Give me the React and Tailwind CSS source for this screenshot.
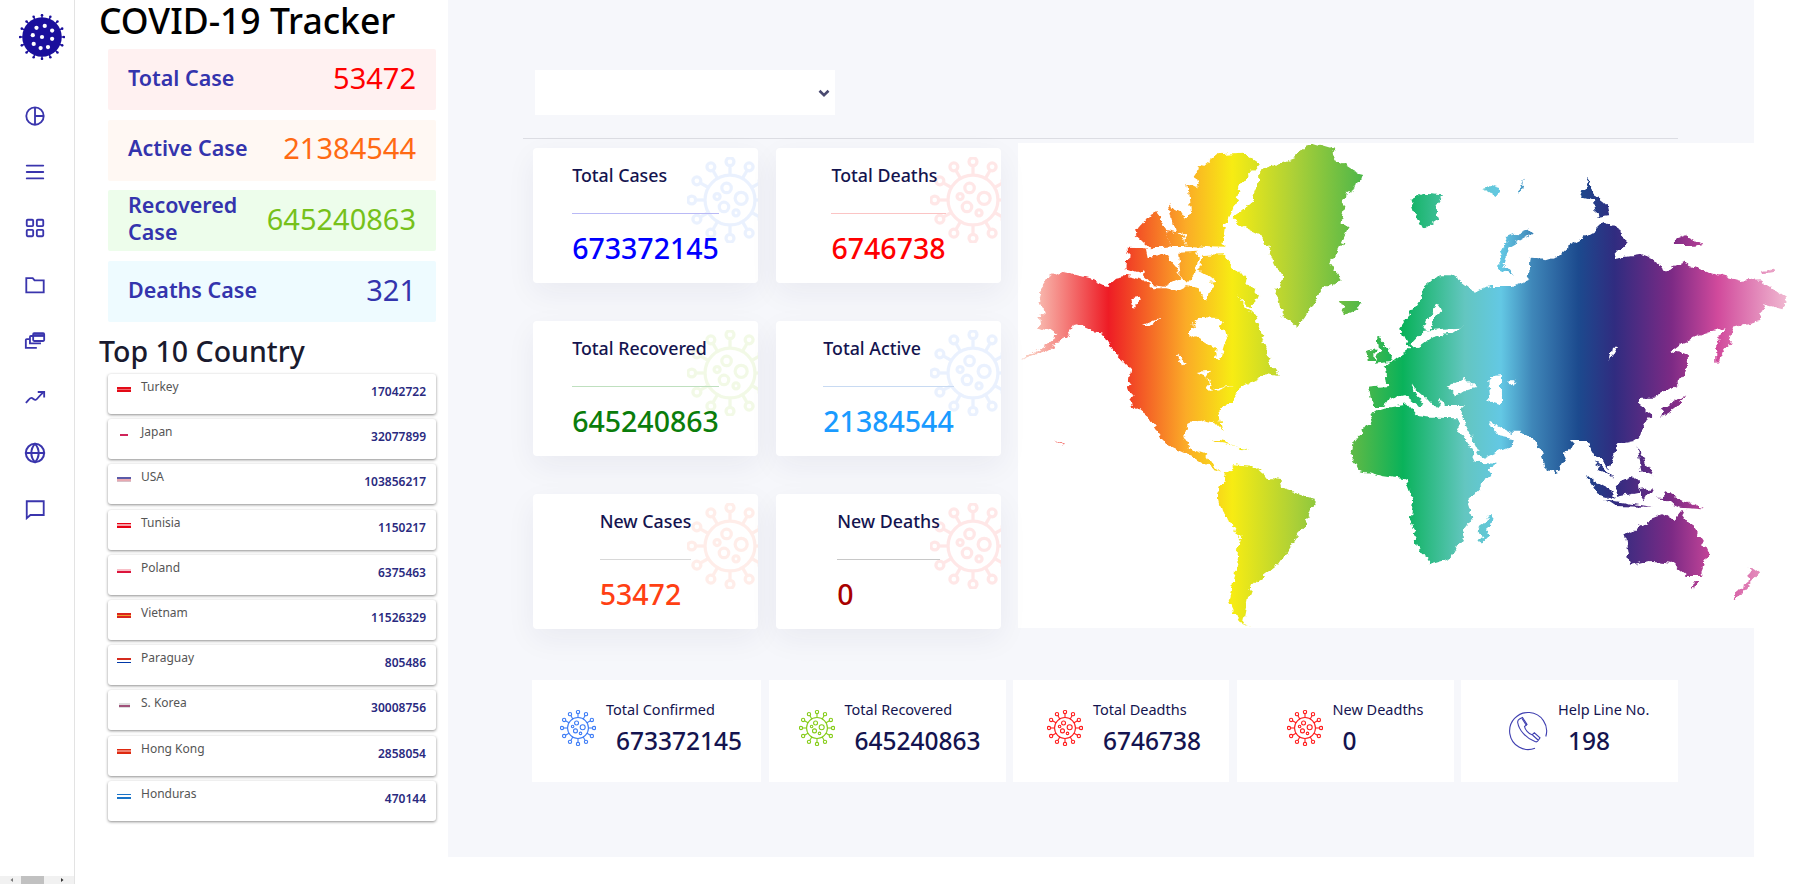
import { AlignJustify, LayoutGrid, Globe } from "lucide-react";

const font = "font-['Noto_Sans',sans-serif]";

function spokes(n, r) {
  return Array.from({ length: n }, (_, i) => {
    const a = (i * 2 * Math.PI) / n - Math.PI / 2;
    return [50 + r * Math.cos(a), 50 + r * Math.sin(a), Math.cos(a), Math.sin(a)];
  });
}

function Virus({ color, size, className = "", sw = 3.4 }) {
  return (
    <svg viewBox="0 0 100 100" width={size} height={size} className={className} fill="none" stroke={color} strokeWidth={sw}>
      <circle cx="50" cy="50" r="29" />
      {spokes(12, 29).map(([x, y, c, s], i) => (
        <g key={i}>
          <line x1={x} y1={y} x2={x + c * 11} y2={y + s * 11} />
          <circle cx={x + c * 15.5} cy={y + s * 15.5} r="4.600" />
        </g>
      ))}
      <circle cx="46" cy="36" r="5.500" />
      <circle cx="63" cy="48" r="7" />
      <circle cx="35" cy="46" r="3.500" />
      <circle cx="43" cy="58" r="5.500" />
      <circle cx="57" cy="65" r="3.500" />
    </svg>
  );
}

function Logo() {
  const dots = [[50, 50], [38, 30], [56, 26], [72, 36], [30, 46], [72, 54], [32, 65], [47, 74], [63, 72]];
  return (
    <svg viewBox="0 0 100 100" width="46" height="46" fill="#1a0f9c">
      <circle cx="50" cy="50" r="43" />
      {spokes(16, 42).map(([x, y, c, s], i) => (
        <g key={i}>
          <line x1={x} y1={y} x2={x + c * 5} y2={y + s * 5} stroke="#1a0f9c" strokeWidth="3" />
          <circle cx={x + c * 5.500} cy={y + s * 5.500} r="2.800" />
        </g>
      ))}
      {dots.map(([x, y], i) => <circle key={i} cx={x} cy={y} r="4.600" fill="#fff" />)}
    </svg>
  );
}

function SideIcon({ children }) {
  return (
    <svg viewBox="0 0 24 24" width="22" height="22" fill="none" stroke="#3a35ad" strokeWidth="2">
      {children}
    </svg>
  );
}

function PhoneIcon() {
  return (
    <svg viewBox="0 0 40 40" width="40" height="40" fill="none" stroke="#3f3fb0" strokeWidth="1.100">
      <path d="M37.800 25.500A18.500 18.500 0 1 0 27 37.200" />
      <path d="M11.500 8l3-1.500 4.500 7-2.500 2c.6 3 3.800 7 7.500 8.300l2.300-2 5.700 5-2 3c-.7 1-2 1.200-3 .8C18 27 11 19.500 9.700 11.500c-.2-1.500.5-2.800 1.800-3.500z" />
      <path d="M14 7.500l4.500 7M24.500 24l5.500 5" />
    </svg>
  );
}

const sideIcons = [
  <SideIcon key="a"><circle cx="12" cy="12" r="9.500" /><path d="M12 2.500v19M12 12h9.500" /></SideIcon>,
  <AlignJustify key="b" size={22} color="#3a35ad" strokeWidth={2} />,
  <LayoutGrid key="c" size={22} color="#3a35ad" strokeWidth={2} />,
  <SideIcon key="d"><path d="M2.500 20V4.500h7l2 2.500h10v13z" /></SideIcon>,
  <SideIcon key="e">
    <rect x="10" y="3.500" width="12" height="8.500" rx="1" />
    <path d="M10 6.500H7.500a1 1 0 0 0-1 1v7h12" />
    <path d="M6 10H3a1 1 0 0 0-1 1v8.500h12" />
    <path d="M10 6h12" strokeWidth="3" />
  </SideIcon>,
  <SideIcon key="f"><path d="M2 18.500c3-3 4-5.500 6-5.500s3 3 5 2 4-5 8-8" /><path d="M15 6.500h7v6" /></SideIcon>,
  <Globe key="g" size={22} color="#3a35ad" strokeWidth={2.200} />,
  <SideIcon key="h"><path d="M3 3.500h18.500v15H7l-4 3.500z" /></SideIcon>,
];

const land = [
  // north america
  "55,505 60,470 72,445 100,422 130,432 160,445 188,465 205,440 222,435 260,448 275,472 300,472 325,480 345,465 362,470 375,505 385,505 392,455 410,450 440,500 470,545 478,575 490,630 500,670 505,700 520,735 495,730 470,750 440,775 425,810 405,845 410,900 397,875 375,868 345,878 335,920 350,955 375,968 390,1005 412,1022 395,1015 360,985 310,948 285,900 268,860 240,825 228,770 232,715 205,670 180,610 140,585 125,580 105,625 65,660 20,688 60,650 95,610 60,590 58,560 70,545 52,520",
  // arctic islands
  "228,350 262,352 268,395 250,425 225,412",
  "262,385 300,370 322,410 330,445 300,468 275,462 255,430",
  "240,305 270,252 285,240 300,300 312,345 272,352",
  "300,300 330,310 340,345 312,345",
  "305,220 330,240 350,290 320,310",
  "345,155 365,170 355,125 400,70 450,65 480,95 450,150 435,210 415,290 410,350 340,345 330,290 350,240",
  "325,365 365,362 360,425 345,452 330,440",
  "370,372 412,370 440,415 480,495 470,530 445,505 410,465 390,440 368,420",
  // greenland, iceland
  "480,120 520,100 545,85 570,45 590,37 620,50 635,90 665,120 680,125 670,170 650,190 640,260 655,290 640,340 620,400 640,445 600,480 570,560 555,590 525,550 515,490 525,440 510,400 490,320 450,290 430,260 470,210 480,170",
  "635,510 675,510 678,530 650,550",
  // north sea islands
  "775,205 800,185 840,190 825,225 830,265 800,295 785,250",
  "915,170 930,165 950,175 940,195",
  "985,175 995,145 990,185",
  "1005,295 1005,310 965,345 955,400 975,435 945,415 945,380 965,320",
  "1120,140 1130,190 1155,220 1160,255 1135,260 1130,210 1105,200",
  "1285,320 1305,310 1340,340 1320,345 1285,345",
  "1460,420 1475,415 1478,425 1460,430",
  // eurasia
  "800,470 830,430 855,430 890,470 900,490 930,465 975,465 1005,445 1010,380 1040,385 1060,375 1085,340 1130,300 1150,270 1185,300 1190,340 1165,385 1225,370 1250,385 1265,420 1305,395 1345,420 1415,450 1450,445 1500,500 1495,535 1460,520 1450,570 1400,590 1392,640 1365,700 1365,640 1385,592 1340,610 1300,635 1280,660 1310,670 1310,720 1290,760 1245,800 1220,800 1215,820 1240,850 1225,895 1210,930 1175,940 1165,985 1160,1015 1130,970 1115,930 1090,930 1060,1020 1040,1015 1020,935 990,905 970,905 925,870 945,915 975,925 970,945 915,985 880,880 875,840 880,825 840,825 835,800 825,835 805,800 775,760 800,820 790,825 760,790 735,800 725,825 700,825 695,770 730,765 725,710 750,680 775,655 765,625 755,590 790,510",
  // africa, madagascar
  "665,930 690,880 710,835 770,820 790,855 820,860 868,862 868,890 895,960 905,992 940,995 915,1060 885,1110 895,1160 880,1190 870,1230 850,1285 810,1303 790,1250 775,1170 780,1110 765,1045 720,1035 680,1020 660,980",
  "925,1150 933,1150 925,1215 915,1238 905,1200",
  // uk, ireland
  "710,615 725,630 740,690 705,695 715,660",
  "690,665 705,655 705,690 692,690",
  // japan
  "1305,790 1290,830 1260,860 1265,835",
  // south east asia
  "1118,1035 1150,1065 1175,1105 1140,1090",
  "1150,1105 1240,1128 1170,1125",
  "1172,1060 1212,1032 1215,1085 1175,1098",
  "1215,1075 1242,1068 1228,1108",
  "1215,950 1245,1030 1222,1022",
  "1272,1082 1340,1135 1300,1130 1258,1102",
  "1130,990 1165,1040 1140,1020",
  "1052,1015 1062,1030 1055,1033",
  // oceania
  "1190,1215 1240,1165 1265,1150 1285,1170 1300,1140 1340,1230 1352,1270 1335,1335 1310,1335 1280,1295 1240,1290 1200,1305",
  "1318,1350 1330,1350 1325,1378",
  "1430,1305 1450,1330 1425,1370 1405,1410 1403,1385 1435,1345",
  // south america
  "430,1000 470,1005 500,1040 525,1045 530,1075 590,1105 575,1170 560,1210 520,1300 490,1335 470,1360 460,1400 450,1480 465,1490 445,1480 425,1410 435,1320 445,1220 410,1140 402,1090 410,1060",
  // caribbean, hawaii
  "390,925 440,945 400,935",
  "440,950 465,955 445,958",
  "85,928 105,945 100,950",
];

const water = [
  "350,590 365,560 410,565 418,620 405,690 395,650 350,610",
  "362,725 385,722 378,738",
  "378,740 392,778 384,780",
  "395,770 425,765 400,780",
  "325,670 340,700 332,703",
  "230,505 255,500 240,530",
  "255,585 290,560 270,585",
  "826,518 832,530 818,570 812,600 800,595 805,560",
  "800,600 848,592 880,590 850,606 815,620 785,655 775,640",
  "845,770 880,740 900,770 860,790",
  "925,740 950,735 950,820 930,810",
  "965,745 980,745 975,765",
  "1165,650 1175,650 1160,690",
];

const stops = [
  [40, "#f9c9bd"], [190, "#ee1c25"], [340, "#fbab27"], [430, "#f7ec13"], [550, "#acd037"], [670, "#58b947"],
  [760, "#09b25a"], [880, "#63c6c0"], [950, "#63c8e4"], [1010, "#3f87b9"], [1100, "#1c4a8e"], [1170, "#302c80"],
  [1280, "#7c2a85"], [1370, "#d14a9c"], [1500, "#efb5cf"],
];

function WorldMap() {
  return (
    <svg viewBox="15 36 1425 1455" preserveAspectRatio="none" width="736" height="485" className="block overflow-visible bg-white">
      <defs>
        <linearGradient id="rainbow" gradientUnits="userSpaceOnUse" x1="0" y1="0" x2="1560" y2="0">
          {stops.map(([x, c]) => <stop key={x} offset={x / 1560} stopColor={c} />)}
        </linearGradient>
        <filter id="rough" filterUnits="userSpaceOnUse" x="0" y="0" width="1560" height="1530" colorInterpolationFilters="sRGB">
          <feTurbulence type="fractalNoise" baseFrequency="0.045" numOctaves="3" seed="4" result="n" />
          <feDisplacementMap in="SourceGraphic" in2="n" scale="22" xChannelSelector="R" yChannelSelector="G" />
        </filter>
        <mask id="landMask" maskUnits="userSpaceOnUse" x="0" y="0" width="1560" height="1530">
          <g filter="url(#rough)">
            {land.map((p, i) => <polygon key={i} points={p} fill="#fff" />)}
            {water.map((p, i) => <polygon key={i} points={p} fill="#000" />)}
          </g>
        </mask>
      </defs>
      <rect x="0" y="0" width="1560" height="1530" fill="url(#rainbow)" mask="url(#landMask)" />
    </svg>
  );
}

const flags = {
  Turkey: { c: ["#e30a17", "#f26a70", "#e30a17"] },
  Japan: { c: ["transparent", "#d0245a", "transparent"], w: "w-[8px] mx-[3px]" },
  USA: { c: ["#5a5aa8", "#e8a8b0", "#d8c0c8"] },
  Tunisia: { c: ["#e70013", "#f6a0a6", "#e70013"] },
  Poland: { c: ["#fff", "#f8c0c8", "#dc143c"] },
  Vietnam: { c: ["#da251d", "#f0a030", "#da251d"] },
  Paraguay: { c: ["#d52b1e", "#fff", "#0038a8"] },
  "S. Korea": { c: ["#ddd", "#a0527a", "#ddd"], w: "w-[11px] mx-[1.500px]" },
  "Hong Kong": { c: ["#de2910", "#f08070", "#de2910"] },
  Honduras: { c: ["#1a74c8", "#fff", "#1a74c8"] },
};

const countries = [
  ["Turkey", 17042722], ["Japan", 32077899], ["USA", 103856217], ["Tunisia", 1150217], ["Poland", 6375463],
  ["Vietnam", 11526329], ["Paraguay", 805486], ["S. Korea", 30008756], ["Hong Kong", 2858054], ["Honduras", 470144],
];

const summary = [
  { label: "Total Case", value: "53472", bg: "bg-[#fff1f1]", color: "text-[#ff0000]" },
  { label: "Active Case", value: "21384544", bg: "bg-[#fff8f3]", color: "text-[#ff6a13]" },
  { label: "Recovered Case", value: "645240863", bg: "bg-[#edfdeb]", color: "text-[#76c11a]" },
  { label: "Deaths Case", value: "321", bg: "bg-[#eefbff]", color: "text-[#3434ad]" },
];

const cards = [
  { label: "Total Cases", value: "673372145", color: "text-[#0000ff]", line: "border-[#b9b9f6]", virus: "#3b82f6" },
  { label: "Total Deaths", value: "6746738", color: "text-[#ff0000]", line: "border-[#fbc4c4]", virus: "#ff2020" },
  { label: "Total Recovered", value: "645240863", color: "text-[#0b7d0b]", line: "border-[#bfe0bf]", virus: "#84cc16" },
  { label: "Total Active", value: "21384544", color: "text-[#1a9bff]", line: "border-[#c8daf2]", virus: "#3b82f6" },
  { label: "New Cases", value: "53472", color: "text-[#ff4013]", line: "border-[#d8d8d8]", virus: "#ff5a30" },
  { label: "New Deaths", value: "0", color: "text-[#a80000]", line: "border-[#c8c8c8]", virus: "#ff2020" },
];

const bottom = [
  { label: "Total Confirmed", value: "673372145", w: "w-[229px]", pl: "pl-[28px]", icon: <Virus color="#3b7bf6" size={36} sw={3} className="-mt-[6px]" /> },
  { label: "Total Recovered", value: "645240863", w: "w-[237px]", pl: "pl-[30px]", icon: <Virus color="#84cc16" size={36} sw={3} className="-mt-[6px]" /> },
  { label: "Total Deadths", value: "6746738", w: "w-[216px]", pl: "pl-[34px]", icon: <Virus color="#ff1a1a" size={36} sw={3} className="-mt-[6px]" /> },
  { label: "New Deadths", value: "0", w: "w-[217px]", pl: "pl-[50px]", icon: <Virus color="#ff1a1a" size={36} sw={3} className="-mt-[6px]" /> },
  { label: "Help Line No.", value: "198", w: "w-[217px]", pl: "pl-[47px]", icon: <PhoneIcon /> },
];

export default function App() {
  return (
    <div className={`flex h-screen w-full overflow-hidden bg-white ${font}`}>
      {/* sidebar */}
      <aside className="relative w-[75px] shrink-0 border-r border-[#e3e3e3] flex flex-col">
        <div className="pl-[19px] pt-[14px]"><Logo /></div>
        <div className="mt-[45px] flex flex-col gap-[34.200px] pl-[24px]">{sideIcons}</div>
        <div className="absolute bottom-0 left-0 right-0 h-[8px] bg-[#f1f1f1] flex items-center">
          <svg viewBox="0 0 6 6" width="6" height="6" className="ml-[9px]"><path d="M4 1L1.500 3 4 5z" fill="#777" /></svg>
          <div className="ml-[6px] h-full w-[23px] bg-[#c1c1c1]" />
          <svg viewBox="0 0 6 6" width="6" height="6" className="ml-[15px]"><path d="M2 1l2.500 2L2 5z" fill="#333" /></svg>
        </div>
      </aside>

      {/* left column */}
      <section className="w-[373px] shrink-0 pl-[24px]">
        <h1 className="text-[35.500px] leading-[40px] font-medium text-black">COVID-19 Tracker</h1>
        <div className="mt-[9px] ml-[9px] w-[328px] flex flex-col gap-[9.700px]">
          {summary.map((s) => (
            <div key={s.label} className={`h-[61px] rounded-[2px] pl-[20px] pr-[20px] flex items-center justify-between ${s.bg}`}>
              <span className="-mt-[5px] w-[145px] text-[21.500px] leading-[27px] font-semibold text-[#3434ad]">{s.label}</span>
              <span className={`-mt-[4px] text-[29px] ${s.color}`}>{s.value}</span>
            </div>
          ))}
        </div>
        <h2 className="mt-[9px] text-[28.500px] leading-[40px] font-medium text-[#1a1a2e]">Top 10 Country</h2>
        <div className="mt-[3px] ml-[9px] w-[328px] flex flex-col gap-[5.200px]">
          {countries.map(([name, n]) => {
            const f = flags[name];
            return (
              <div key={name} className="h-[40px] rounded-[3px] bg-white shadow-[0_1px_3px_rgba(0,0,0,0.45)] pl-[9px] pr-[10px] flex justify-between">
                <div className="flex items-start">
                  <span className={`mt-[13px] h-[5px] flex flex-col overflow-hidden ${f.w || "w-[14px]"}`}>
                    {f.c.map((c, i) => <span key={i} className="h-1/3 w-full block" style={{ background: c }} />)}
                  </span>
                  <span className="ml-[10px] mt-[4px] text-[12px] leading-[18px] text-[#555]">{name}</span>
                </div>
                <span className="mt-[9px] text-[12px] leading-[18px] font-semibold text-[#2a2a80]">{n}</span>
              </div>
            );
          })}
        </div>
      </section>

      {/* main panel */}
      <main className="w-[1306px] h-[857px] shrink-0 bg-[#f6f7fb] pt-[70px]">
        <div className="ml-[87px] w-[300px] h-[45px] bg-white flex items-center justify-end pr-[2px]">
          <svg viewBox="0 0 24 24" width="18" height="18" fill="none" stroke="#4a4a70" strokeWidth="3.500"><path d="M6 9l6 6 6-6" /></svg>
        </div>
        <div className="ml-[75px] mt-[23px] w-[1155px] border-t border-[#dcdde3]" />
        <div className="mt-[4px] flex">
          <div className="ml-[85px] mt-[5px] w-[468px] grid grid-cols-[225px_225px] gap-x-[18px] gap-y-[38px]">
            {cards.map((c) => (
              <div key={c.label} className="relative h-[135px] rounded-[4px] bg-white overflow-hidden shadow-[0_10px_30px_rgba(40,40,90,0.06)] flex justify-center">
                <Virus color={c.virus} size={86} sw={3.800} className="absolute left-[154px] top-[9px] opacity-10" />
                <div className="relative pt-[14px]">
                  <div className="text-[17.800px] leading-[26px] font-medium text-[#14144f]">{c.label}</div>
                  <div className={`mt-[25px] border-t ${c.line}`} />
                  <div className={`mt-[14px] text-[28.500px] leading-[40px] font-medium ${c.color}`}>{c.value}</div>
                </div>
              </div>
            ))}
          </div>
          <div className="ml-[17px]"><WorldMap /></div>
        </div>
        <div className="mt-[51px] ml-[84px] flex gap-[7.500px]">
          {bottom.map((b) => (
            <div key={b.label} className={`h-[102px] bg-white flex items-center ${b.w} ${b.pl}`}>
              {b.icon}
              <div className="ml-[10px] -mt-[4px]">
                <div className="-mt-[3px] text-[14.500px] leading-[22px] text-[#14144f]">{b.label}</div>
                <div className="mt-[4px] ml-[10px] text-[24.500px] leading-[34px] font-medium text-[#14144f]">{b.value}</div>
              </div>
            </div>
          ))}
        </div>
      </main>
    </div>
  );
}
